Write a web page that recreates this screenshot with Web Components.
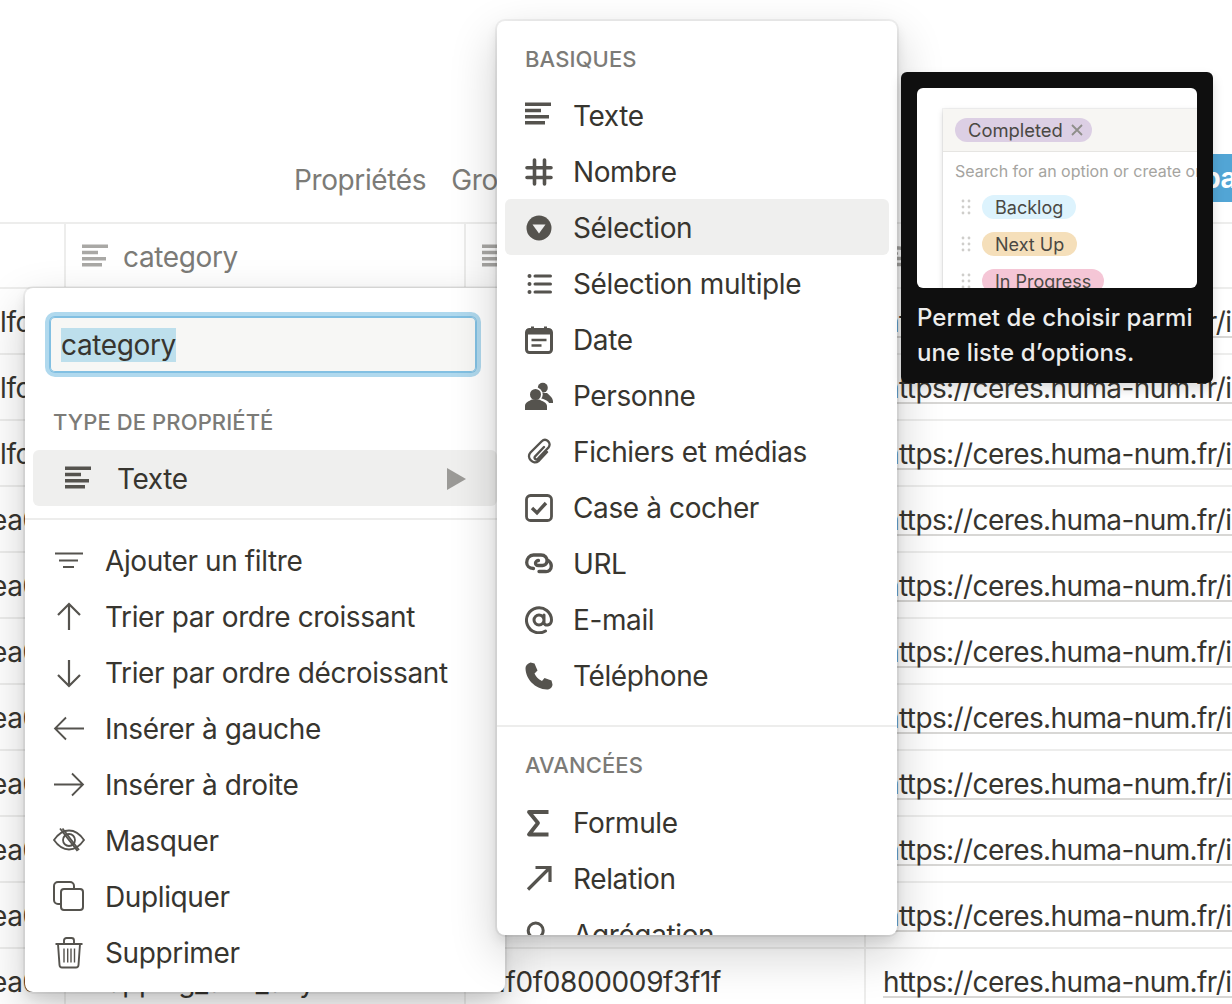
<!DOCTYPE html>
<html lang="fr">
<head>
<meta charset="utf-8">
<title>Propriété</title>
<style>
  html, body { margin: 0; height: 100%; overflow: hidden; background: #fff; }
  body { font-family: Inter, "Liberation Sans", sans-serif; color: #37352f; }
</style>
</head>
<body>
<db-page>
  <db-toolbar></db-toolbar>
  <db-table></db-table>
  <prop-menu></prop-menu>
  <type-menu></type-menu>
  <type-tip></type-tip>
</db-page>

<script>
const ICONS = {
  text: '<path fill="currentColor" d="M0 .5h26v3.600H0zM0 6.700h16v3.600H0zM0 12.900h24v3.600H0zM0 19h20v3.600H0z"/>',
  hash: '<path fill="none" stroke="currentColor" stroke-width="3.600" stroke-linecap="round" d="M9.500 2v24M19.500 2v24M2 9.700h24M2 19.500h24"/>',
  select: '<circle cx="14" cy="14" r="12.500" fill="currentColor"/><path fill="#efefee" d="M7.500 10.500h13L14 19.500z"/>',
  multi: '<path fill="none" stroke="currentColor" stroke-width="3" stroke-linecap="round" d="M10 6h15.500M10 14h15.500M10 22h15.500"/><circle cx="4.500" cy="6" r="2" fill="currentColor"/><circle cx="4.500" cy="14" r="2" fill="currentColor"/><circle cx="4.500" cy="22" r="2" fill="currentColor"/>',
  date: '<rect x="1.500" y="3.500" width="25" height="23" rx="3" fill="none" stroke="currentColor" stroke-width="3"/><path fill="currentColor" d="M1.500 3.500h25v5h-25zM6 .5h3v4H6zM19 .5h3v4h-3z"/><path fill="none" stroke="currentColor" stroke-width="2.400" d="M6.500 14h15M6.500 19.500h10"/>',
  person: '<circle cx="17.800" cy="5.800" r="5" fill="currentColor"/><path fill="currentColor" d="M14 11h8c3 2.500 6 5 6 9v1H14z"/><circle cx="10.500" cy="12.500" r="7.200" fill="#fff"/><path fill="#fff" d="M-2 30v-6c0-5 5-7 8-8h9c4 1 10 3 10 8v6z"/><circle cx="10.500" cy="12.500" r="5.500" fill="currentColor"/><path fill="currentColor" d="M0 28v-4c0-3.500 4-5 7-6.500h7c3 1.500 8 3 8 6.500v4z"/>',
  clip: '<path fill="none" stroke="currentColor" stroke-width="2.400" stroke-linecap="round" d="M19 9l-9 9.500c-1.500 2 1 4 3 2L23.500 9.500C27 5 21-1 16.500 3.500L5.500 14.500c-4.500 5 2.500 13 8 8.500L22 14"/>',
  check: '<rect x="1.500" y="1.500" width="25" height="25" rx="4" fill="none" stroke="currentColor" stroke-width="2.800"/><path fill="none" stroke="currentColor" stroke-width="3.400" d="M7 14l5 4.800L21 9"/>',
  url: '<path fill="none" stroke="currentColor" stroke-width="3.300" stroke-linecap="round" d="M8.500 18.500C4 18.500 1.700 15.500 1.700 12.500 1.700 8.500 4.500 5 8.500 5h7.500c4 0 6.500 3 6 6.500-.3 2.500-2.500 4-4.500 4h-4c-2 0-3-1-3-2.500 0-1.500 1.500-2.500 3-2.500"/><path fill="none" stroke="currentColor" stroke-width="3.300" stroke-linecap="round" d="M14 21.500h6c4 .5 6.300-2 6.300-5.500 0-2.500-1-4-3-5.500"/>',
  at: '<path fill="none" stroke="currentColor" stroke-width="3" stroke-linecap="round" d="M19 14a5 5 0 1 1-10 0 5 5 0 1 1 10 0zM19 9v7.500c0 4 7.500 3.500 7.500-2.500A12.500 12.500 0 1 0 20.500 25"/>',
  phone: '<path fill="currentColor" d="M5.500.5 9.500 1.500 12.500 8.500 9.500 11.500C11 15 13 17 17 19L19.500 16 26.500 18.500 27.500 22.500C27.500 25.500 24.500 27.500 22 27.500 10 27 .5 17 .5 6 .5 3.500 2.500 1.500 5.500.5Z"/>',
  sigma: '<path fill="none" stroke="currentColor" stroke-width="3.800" stroke-linejoin="round" d="M23.500 3H4l9 11-9 11.500h19.500"/>',
  relation: '<path fill="none" stroke="currentColor" stroke-width="3.200" d="M3 24.500 24 3.500M10.500 2.500H25v14.500"/>',
  rollup: '<circle cx="10.700" cy="9.500" r="7.500" fill="none" stroke="currentColor" stroke-width="3"/><path stroke="currentColor" stroke-width="3" d="M16 15l8 8"/>',
  filter: '<path fill="none" stroke="currentColor" stroke-width="2" d="M2 8.500h28M6 15.500h19M10 22h11"/>',
  up: '<path fill="none" stroke="currentColor" stroke-width="2.200" d="M16 29V3M5 14 16 3l11 11"/>',
  down: '<path fill="none" stroke="currentColor" stroke-width="2.200" d="M16 3v26M5 18l11 11 11-11"/>',
  left: '<path fill="none" stroke="currentColor" stroke-width="1.800" d="M31 15.500H2M13 4.500l-11 11 11 11"/>',
  right: '<path fill="none" stroke="currentColor" stroke-width="1.800" d="M1 15.500h29M19 4.500l11 11-11 11"/>',
  hide: '<g fill="none" stroke="currentColor" stroke-width="1.800"><path d="M1 15C5.500 8.500 10.500 5.500 16 5.500S26.500 8.500 31 15C26.500 21.500 21.500 24.500 16 24.500S5.500 21.500 1 15z"/><circle cx="16" cy="15" r="6"/><path d="M7 3.500l17.500 22.500M9.500 3.500 26 25"/></g>',
  copy: '<g fill="none" stroke="currentColor" stroke-width="2"><path d="M8 23H5a4 4 0 0 1-4-4V5a4 4 0 0 1 4-4h12a4 4 0 0 1 4 4v3"/><rect x="8" y="8" width="22" height="21" rx="3"/></g>',
  trash: '<g fill="none" stroke="currentColor" stroke-width="1.900"><path d="M2.500 7h27M11 7V3.500C11 2 12 1 13.500 1h5C20 1 21 2 21 3.500V7M5 7l1.500 21c.1 1.500 1.200 2.500 2.500 2.500h14c1.300 0 2.400-1 2.500-2.500L27 7"/><path stroke-width="1.400" d="M11 11.500v14M14.700 11.500v14M18 11.500v14M21.500 11.500v14"/></g>'
};

function iconSvg(name, size) {
  return `<svg viewBox="0 0 ${size} ${size}" width="${size}" height="${size}" style="overflow:hidden;flex:none;display:block">${ICONS[name]}</svg>`;
}

class DbPage extends HTMLElement {
  constructor() {
    super();
    this.attachShadow({ mode: 'open' });
    this.shadowRoot.innerHTML = `
      <style>
        :host { display: block; position: relative; width: 1232px; height: 1004px; overflow: hidden; font-size: 28px; letter-spacing: -0.38px; }
      </style>
      <slot></slot>
    `;
  }
}

class DbToolbar extends HTMLElement {
  constructor() {
    super();
    this.attachShadow({ mode: 'open' });
    this.shadowRoot.innerHTML = `
      <style>
        :host { display: flex; align-items: flex-end; box-sizing: border-box; height: 224px; padding: 0 0 20px 294px; border-bottom: 2px solid #ededec; color: #7c7b77; white-space: nowrap; }
        .item { height: 48px; line-height: 52px; margin-right: 25px; }
        .sort { margin-left: 346px; width: 26px; height: 48px; display: flex; align-items: center; color: #8a8985; }
        .new { margin-left: auto; box-sizing: border-box; width: 35px; height: 48px; padding-left: 6px; overflow: hidden; background: #52a5d5; color: #fff; font-weight: 700; line-height: 48px; }
      </style>
      <span class="item">Propriétés</span>
      <span class="item">Grouper</span>
      <span class="sort">${iconSvg('filter', 32)}</span>
      <span class="new">pa</span>
    `;
  }
}

class DbTable extends HTMLElement {
  constructor() {
    super();
    this.attachShadow({ mode: 'open' });
    const rows = [];
    for (let i = 0; i < 11; i++) {
      const first = i < 3 ? 'lfd' : 'ea0';
      const offset = i < 3 ? 0 : -9;
      const last = i === 10;
      rows.push(`
        <div class="row">
          <div class="cell first"><span style="margin-left:${offset}px">${first}</span></div>
          <div class="cell">${last ? 'Mapping_and_any' : ''}</div>
          <div class="cell third">${last ? '1f0f0800009f3f1f' : ''}</div>
          <div class="cell last"><a>https://ceres.huma-num.fr/iiif</a></div>
        </div>`);
    }
    this.shadowRoot.innerHTML = `
      <style>
        :host { display: block; }
        .row { display: grid; grid-template-columns: 66px 400px 400px 1fr; height: 66px; box-sizing: border-box; border-bottom: 2px solid #ededec; }
        .head { height: 65px; color: #7c7b77; }
        .cell { box-sizing: border-box; min-width: 0; overflow: hidden; white-space: nowrap; padding: 16px 0 0 16px; line-height: 34px; border-right: 2px solid #ededec; color: #37352f; }
        .first { padding-left: 0; }
        .third { padding-left: 0; text-align: right; padding-right: 143px; }
        .last { border-right: 0; padding: 19px 0 0 17px; line-height: 28px; letter-spacing: -0.6px; }
        a { display: inline-block; border-bottom: 2px solid #d8d7d5; }
        .th { display: flex; align-items: center; gap: 15px; box-sizing: border-box; padding: 2px 0 0 16px; color: #7c7b77; border-right: 2px solid #ededec; overflow: hidden; }
        .th svg { color: #a9a8a5; }
      </style>
      <div class="row head">
        <div class="th" style="padding:0"></div>
        <div class="th">${iconSvg('text', 26)}<span>category</span></div>
        <div class="th">${iconSvg('text', 26)}</div>
        <div class="th" style="border:0;padding-left:17px">${iconSvg('url', 28)}</div>
      </div>
      ${rows.join('')}
    `;
  }
}

class MenuRow extends HTMLElement {
  constructor() {
    super();
    this.attachShadow({ mode: 'open' });
  }

  connectedCallback() {
    const size = Number(this.getAttribute('size') || 28);
    this.shadowRoot.innerHTML = `
      <style>
        :host { display: flex; align-items: center; box-sizing: border-box; height: 56px; padding: 2px 0 0 20px; gap: 20px; border-radius: 6px; color: #37352f; white-space: nowrap; }
        :host([active]) { background: #efefee; }
        .icon { color: #55534e; }
        :host([wide]) { padding-left: 32px; gap: 26px; }
        .arrow { margin-left: auto; margin-right: 31px; width: 0; height: 0; border-left: 19px solid #9b9a97; border-top: 11px solid transparent; border-bottom: 11px solid transparent; }
      </style>
      <span class="icon">${iconSvg(this.getAttribute('icon'), size)}</span>
      <slot></slot>
      ${this.hasAttribute('arrow') ? '<span class="arrow"></span>' : ''}
    `;
  }
}

class MenuLabel extends HTMLElement {
  constructor() {
    super();
    this.attachShadow({ mode: 'open' });
    this.shadowRoot.innerHTML = `
      <style>
        :host { display: flex; align-items: center; height: 40px; padding-left: 20px; font-size: 22px; font-weight: 500; letter-spacing: 0.1px; color: #7c7b77; white-space: nowrap; }
      </style>
      <slot></slot>
    `;
  }
}

const MENU_SHADOW = '0 0 0 2px rgba(15,15,15,.05), 0 6px 12px rgba(15,15,15,.1), 0 18px 48px rgba(15,15,15,.2)';

class PropMenu extends HTMLElement {
  constructor() {
    super();
    this.attachShadow({ mode: 'open' });
    this.shadowRoot.innerHTML = `
      <style>
        :host { position: absolute; left: 25px; top: 288px; width: 480px; box-sizing: border-box; padding: 29px 8px 12px; background: #fff; border-radius: 8px; box-shadow: ${MENU_SHADOW}; }
        .field { display: flex; align-items: center; box-sizing: border-box; height: 55px; margin: 0 21px 0 17px; padding-left: 11px; background: #f7f7f5; border-radius: 5px; box-shadow: inset 0 0 0 1px #82c0e2, 0 0 0 1px #82c0e2, 0 0 0 5px #b0d9ee; color: #37352f; }
        .field span { display: block; height: 34px; line-height: 35px; background: #bddfec; }
        menu-label { margin: 30px 0 8px; }
        hr { border: 0; height: 2px; background: #ededec; margin: 12px -8px 12px; }
      </style>
      <div class="field"><span>category</span></div>
      <menu-label>TYPE DE PROPRIÉTÉ</menu-label>
      <menu-row icon="text" size="26" wide arrow active>Texte</menu-row>
      <hr>
      <menu-row icon="filter" size="32">Ajouter un filtre</menu-row>
      <menu-row icon="up" size="32">Trier par ordre croissant</menu-row>
      <menu-row icon="down" size="32">Trier par ordre décroissant</menu-row>
      <menu-row icon="left" size="32">Insérer à gauche</menu-row>
      <menu-row icon="right" size="32">Insérer à droite</menu-row>
      <menu-row icon="hide" size="32">Masquer</menu-row>
      <menu-row icon="copy" size="32">Dupliquer</menu-row>
      <menu-row icon="trash" size="32">Supprimer</menu-row>
    `;
  }
}

class TypeMenu extends HTMLElement {
  constructor() {
    super();
    this.attachShadow({ mode: 'open' });
    this.shadowRoot.innerHTML = `
      <style>
        :host { position: absolute; left: 497px; top: 21px; width: 400px; height: 914px; border-radius: 8px; background: #fff; box-shadow: ${MENU_SHADOW}; }
        .scroll { height: 100%; overflow: hidden; border-radius: 8px; box-sizing: border-box; padding: 18px 8px 0; }
        menu-label { margin-bottom: 8px; }
        hr { border: 0; height: 2px; background: #ededec; margin: 22px -8px 18px; }
        .next { margin-bottom: 9px; }
      </style>
      <div class="scroll">
        <menu-label>BASIQUES</menu-label>
        <menu-row icon="text">Texte</menu-row>
        <menu-row icon="hash">Nombre</menu-row>
        <menu-row icon="select" active>Sélection</menu-row>
        <menu-row icon="multi">Sélection multiple</menu-row>
        <menu-row icon="date">Date</menu-row>
        <menu-row icon="person">Personne</menu-row>
        <menu-row icon="clip">Fichiers et médias</menu-row>
        <menu-row icon="check">Case à cocher</menu-row>
        <menu-row icon="url">URL</menu-row>
        <menu-row icon="at">E-mail</menu-row>
        <menu-row icon="phone">Téléphone</menu-row>
        <hr>
        <menu-label class="next">AVANCÉES</menu-label>
        <menu-row icon="sigma">Formule</menu-row>
        <menu-row icon="relation">Relation</menu-row>
        <menu-row icon="rollup">Agrégation</menu-row>
      </div>
    `;
  }
}

class TagChip extends HTMLElement {
  constructor() {
    super();
    this.attachShadow({ mode: 'open' });
    this.shadowRoot.innerHTML = `
      <style>
        :host { display: inline-flex; align-items: center; gap: 8px; box-sizing: border-box; height: 24px; padding: 1px 13px 0; border-radius: 12px; font-size: 18px; letter-spacing: 0; color: #4a4843; white-space: nowrap; }
      </style>
      <slot></slot>
    `;
  }
}

class TypeTip extends HTMLElement {
  constructor() {
    super();
    this.attachShadow({ mode: 'open' });
    const option = (label, color) => `
      <div class="opt">
        <svg class="grip" width="10" height="16" viewBox="0 0 10 16" fill="#cfcecb"><circle cx="2" cy="2" r="1.400"/><circle cx="8" cy="2" r="1.400"/><circle cx="2" cy="8" r="1.400"/><circle cx="8" cy="8" r="1.400"/><circle cx="2" cy="14" r="1.400"/><circle cx="8" cy="14" r="1.400"/></svg>
        <tag-chip style="background:${color}">${label}</tag-chip>
      </div>`;
    this.shadowRoot.innerHTML = `
      <style>
        :host { position: absolute; left: 901px; top: 72px; width: 312px; box-sizing: border-box; padding: 16px 16px 13px; background: #0f0f0f; border-radius: 6px; box-shadow: 0 6px 12px rgba(15,15,15,.15); }
        .preview { height: 200px; background: #fff; border-radius: 6px; overflow: hidden; padding: 21px 0 0 26px; box-sizing: border-box; }
        .card { width: 300px; height: 220px; box-shadow: 0 0 0 1px rgba(15,15,15,.05), 0 2px 6px rgba(15,15,15,.15); }
        .top { display: flex; align-items: center; box-sizing: border-box; height: 43px; padding: 0 0 1px 12px; background: #f7f6f3; border-bottom: 1px solid #e6e5e2; }
        .top tag-chip { padding-right: 9px; font-size: 18.400px; }
        .top svg { display: block; }
        .hint { height: 36px; line-height: 38px; padding-left: 12px; font-size: 16px; letter-spacing: 0; color: #a5a4a0; white-space: nowrap; overflow: hidden; }
        .opt { display: flex; align-items: center; height: 37px; padding-left: 18px; gap: 11px; }
        p { margin: 12px 0 0; font-size: 24px; font-weight: 500; line-height: 35px; letter-spacing: 0.1px; color: #ededec; }
      </style>
      <div class="preview">
        <div class="card">
          <div class="top"><tag-chip style="background:#dccfe4">Completed <svg width="12" height="12" viewBox="0 0 12 12"><path fill="none" stroke="#8f8e8a" stroke-width="1.800" d="M1 1l10 10M11 1 1 11"/></svg></tag-chip></div>
          <div class="hint">Search for an option or create one...</div>
          ${option('Backlog', '#ddf3fd')}
          ${option('Next Up', '#f5dfba')}
          ${option('In Progress', '#f5c6d6')}
        </div>
      </div>
      <p>Permet de choisir parmi<br>une liste d’options.</p>
    `;
  }
}

customElements.define('db-page', DbPage);
customElements.define('db-toolbar', DbToolbar);
customElements.define('db-table', DbTable);
customElements.define('menu-row', MenuRow);
customElements.define('menu-label', MenuLabel);
customElements.define('prop-menu', PropMenu);
customElements.define('type-menu', TypeMenu);
customElements.define('tag-chip', TagChip);
customElements.define('type-tip', TypeTip);
</script>
</body>
</html>
